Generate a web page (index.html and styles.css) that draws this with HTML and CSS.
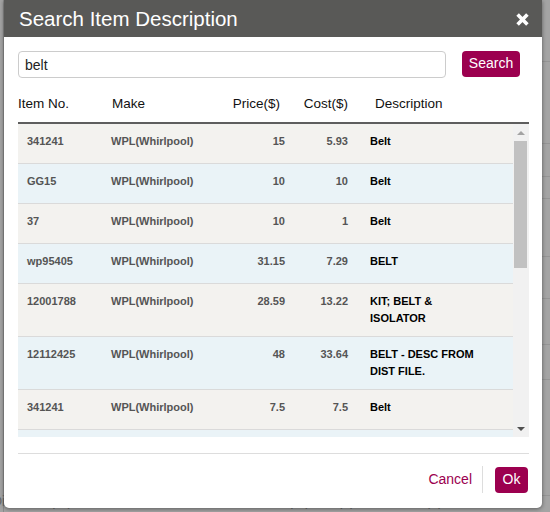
FILE: index.html
```html
<!DOCTYPE html>
<html lang="en">
  <head>
    <meta http-equiv="Content-Type" content="text/html; charset=utf-8" />
    <title>Search Item Description</title>
    <link rel="stylesheet" href="styles.css">
  </head>
  <body>
    <div class="page">
      <div class="page-row" style="height: 62px"></div>
      <div class="page-row" style="height: 82px"></div>
      <div class="page-row" style="height: 33px"></div>
      <div class="page-row" style="height: 22px"></div>
      <div class="page-row" style="height: 58px"></div>
      <div class="page-row" style="height: 42px"></div>
      <div class="page-row" style="height: 46px"></div>
      <div class="page-row" style="height: 35px"></div>
      <div class="page-row" style="height: 116px"></div>
      <div class="page-labels">
        <span class="lbl-discount">Discount (%)</span>
        <span class="lbl-taxable">Taxable</span>
        <span class="lbl-rate">Tax Rate (%)</span>
        <span class="lbl-tax">Tax ($)</span>
        <span class="lbl-total">Total ($)</span>
        <span class="lbl-action">Action</span>
      </div>
    </div>

    <div class="modal">
      <div class="modal-header">
        <h1 class="modal-title">Search Item Description</h1>
        <svg class="modal-close" width="13" height="13" viewBox="0 0 13 13">
          <path d="M1.6 1.6 L11.4 11.4 M11.4 1.6 L1.6 11.4" stroke="#fff" stroke-width="3.6" fill="none" />
        </svg>
      </div>
      <div class="modal-body">
        <div class="search-row">
          <input type="text" class="search-input" value="belt" />
          <button type="button" class="btn btn-primary btn-search">Search</button>
        </div>

        <div class="grid-head">
          <div class="h-item">Item No.</div>
          <div class="h-make">Make</div>
          <div class="h-price">Price($)</div>
          <div class="h-cost">Cost($)</div>
          <div class="h-desc">Description</div>
        </div>

        <div class="grid-body">
          <div class="grid-rows">
            <div class="row">
              <div class="c-item">341241</div>
              <div class="c-make">WPL(Whirlpool)</div>
              <div class="c-price">15</div>
              <div class="c-cost">5.93</div>
              <div class="c-desc">Belt</div>
            </div>
            <div class="row">
              <div class="c-item">GG15</div>
              <div class="c-make">WPL(Whirlpool)</div>
              <div class="c-price">10</div>
              <div class="c-cost">10</div>
              <div class="c-desc">Belt</div>
            </div>
            <div class="row">
              <div class="c-item">37</div>
              <div class="c-make">WPL(Whirlpool)</div>
              <div class="c-price">10</div>
              <div class="c-cost">1</div>
              <div class="c-desc">Belt</div>
            </div>
            <div class="row">
              <div class="c-item">wp95405</div>
              <div class="c-make">WPL(Whirlpool)</div>
              <div class="c-price">31.15</div>
              <div class="c-cost">7.29</div>
              <div class="c-desc">BELT</div>
            </div>
            <div class="row">
              <div class="c-item">12001788</div>
              <div class="c-make">WPL(Whirlpool)</div>
              <div class="c-price">28.59</div>
              <div class="c-cost">13.22</div>
              <div class="c-desc">KIT; BELT &amp; ISOLATOR</div>
            </div>
            <div class="row">
              <div class="c-item">12112425</div>
              <div class="c-make">WPL(Whirlpool)</div>
              <div class="c-price">48</div>
              <div class="c-cost">33.64</div>
              <div class="c-desc">BELT - DESC FROM DIST FILE.</div>
            </div>
            <div class="row">
              <div class="c-item">341241</div>
              <div class="c-make">WPL(Whirlpool)</div>
              <div class="c-price">7.5</div>
              <div class="c-cost">7.5</div>
              <div class="c-desc">Belt</div>
            </div>
            <div class="row"></div>
          </div>
          <div class="scrollbar">
            <div class="arrow arrow-up"></div>
            <div class="thumb"></div>
            <div class="arrow arrow-down"></div>
          </div>
        </div>
      </div>
      <div class="modal-footer">
        <a class="link-cancel">Cancel</a>
        <span class="divider"></span>
        <button type="button" class="btn btn-primary btn-ok">Ok</button>
      </div>
    </div>
  </body>
</html>
```

FILE: styles.css
```css
html,
body {
  margin: 0;
  padding: 0;
  height: 100%;
}
body {
  background-color: #a4a4a4;
  font-family: "Liberation Sans", Arial, sans-serif;
  overflow: hidden;
}
.page {
  margin-left: 3px;
  border-left: 1px solid #8c8c8c;
  height: 100%;
}
.page-row {
  border-bottom: 1px solid #959595;
  box-sizing: border-box;
}
.page-labels {
  display: flex;
  font-size: 14px;
  line-height: 16px;
  color: #6a6a6a;
  margin-top: -3px;
}
.lbl-discount { margin-left: -12px; width: 157px; }
.lbl-taxable { width: 80px; }
.lbl-rate { width: 83px; }
.lbl-tax { width: 80px; }
.lbl-total { width: 90px; }

/* modal */
.modal {
  position: absolute;
  top: 0;
  left: 4px;
  width: 538px;
  height: 508px;
  background: #fff;
  border-radius: 0 0 5px 5px;
  box-shadow: 0 1px 4px rgba(0, 0, 0, 0.45);
  overflow: hidden;
}
.modal-header {
  height: 37px;
  background-color: #595957;
  display: flex;
  align-items: center;
  justify-content: space-between;
  padding: 0 13px 0 15px;
}
.modal-title {
  margin: 0;
  font-size: 20.5px;
  font-weight: normal;
  color: #fff;
  line-height: 37px;
}
.modal-close {
  display: block;
  margin-top: 1px;
}
.modal-body {
  padding: 14px 13px 0 14px;
}
.search-row {
  display: flex;
  align-items: flex-start;
  height: 27px;
}
.search-input {
  flex: 1;
  height: 27px;
  box-sizing: border-box;
  border: 1px solid #cccccc;
  border-radius: 4px;
  padding: 0 6px;
  font-family: "Liberation Sans", Arial, sans-serif;
  font-size: 14px;
  color: #222;
  outline: none;
}
.btn {
  border: 0;
  margin: 0;
  cursor: pointer;
  font-family: "Liberation Sans", Arial, sans-serif;
  font-size: 14px;
  color: #fff;
  border-radius: 4px;
}
.btn-primary {
  background-color: #9c004f;
}
.btn-search {
  height: 26px;
  width: 58px;
  padding: 0 0 2px;
  margin-left: 16px;
  margin-right: 9px;
}

/* grid header */
.grid-head {
  display: flex;
  padding-top: 17px;
  padding-bottom: 10px;
  line-height: 17px;
  font-size: 13.5px;
  color: #111;
  border-bottom: 2px solid #5e5e5e;
}
.h-item { width: 94px; }
.h-make { width: 113px; }
.h-price { width: 55px; text-align: right; }
.h-cost { width: 68px; text-align: right; }
.h-desc { padding-left: 27px; }

/* grid body */
.grid-body {
  display: flex;
  height: 313px;
}
.grid-rows {
  width: 495px;
  overflow: hidden;
}
.row {
  display: flex;
  box-sizing: border-box;
  min-height: 40px;
  border-bottom: 1px solid #dadada;
  background-color: #f3f2ef;
  font-size: 11px;
  font-weight: bold;
  line-height: 17px;
  color: #555;
}
.row:nth-child(even) {
  background-color: #eaf3f7;
}
.row > div {
  padding: 9px;
  box-sizing: border-box;
}
.c-item { width: 84px; }
.c-make { width: 113px; }
.c-price { width: 79px; text-align: right; }
.c-cost { width: 63px; text-align: right; }
.c-desc {
  width: 156px;
  color: #000;
  padding-left: 13px !important;
  padding-right: 34px !important;
}

/* scrollbar */
.scrollbar {
  width: 16px;
  background-color: #f1f1f1;
  position: relative;
}
.thumb {
  position: absolute;
  left: 1px;
  right: 2px;
  top: 17px;
  height: 127px;
  background-color: #c1c1c1;
}
.arrow {
  position: absolute;
  left: 4px;
  width: 0;
  height: 0;
  border-left: 4px solid transparent;
  border-right: 4px solid transparent;
}
.arrow-up {
  top: 7px;
  border-bottom: 4px solid #a3a3a3;
}
.arrow-down {
  bottom: 6px;
  border-top: 4px solid #505050;
}

/* footer */
.modal-footer {
  margin: 16px 13px 0 14px;
  border-top: 1px solid #dddddd;
  padding-top: 12px;
  display: flex;
  justify-content: flex-end;
  align-items: center;
}
.link-cancel {
  font-size: 14px;
  color: #9c004f;
  cursor: pointer;
  margin-bottom: 2px;
}
.divider {
  width: 1px;
  height: 27px;
  background-color: #dddddd;
  margin: 0 12px 0 10px;
}
.btn-ok {
  height: 26px;
  width: 33px;
  padding: 0 0 2px;
  margin-right: 1px;
}
```
